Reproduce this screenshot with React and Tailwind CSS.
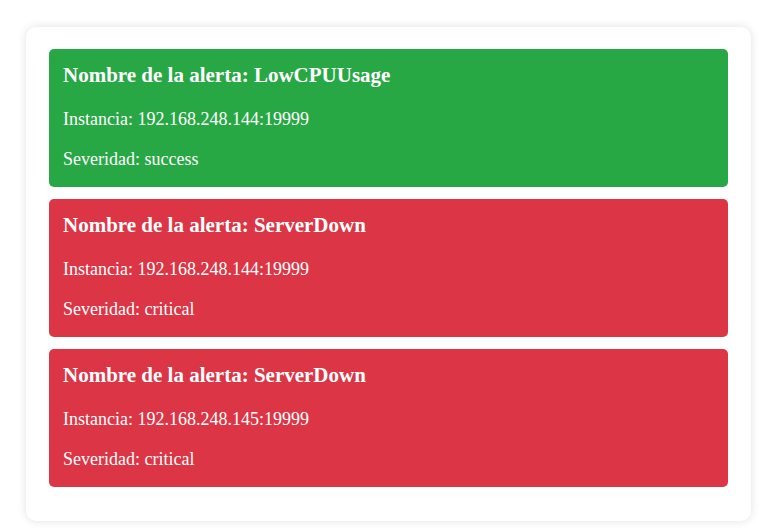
const alerts = [
  { name: 'LowCPUUsage', instance: '192.168.248.144:19999', severity: 'success' },
  { name: 'ServerDown', instance: '192.168.248.144:19999', severity: 'critical' },
  { name: 'ServerDown', instance: '192.168.248.145:19999', severity: 'critical' },
];

function AlertCard({ alert }) {
  const bg = alert.severity === 'success' ? 'bg-[#28a745]' : 'bg-[#dc3545]';
  return (
    <div className={`${bg} mb-[12px] h-[138px] rounded-[5px] px-[14px] pt-[14px] text-white`}>
      <h3 className="text-[21px] font-bold leading-[24px]">Nombre de la alerta: {alert.name}</h3>
      <p className="mt-[21px] text-[18px] leading-[22px]">Instancia: {alert.instance}</p>
      <p className="mt-[18px] text-[18px] leading-[22px]">Severidad: {alert.severity}</p>
    </div>
  );
}

export default function App() {
  return (
    <div className="min-h-[531px] bg-white pt-[27px] font-['Liberation_Serif',serif]">
      <div className="ml-[26px] w-[725px] rounded-[10px] bg-white px-[23px] pb-[22px] pt-[22px] shadow-[0_0_10px_rgba(0,0,0,0.12)]">
        {alerts.map((a, i) => (
          <AlertCard key={i} alert={a} />
        ))}
      </div>
    </div>
  );
}
